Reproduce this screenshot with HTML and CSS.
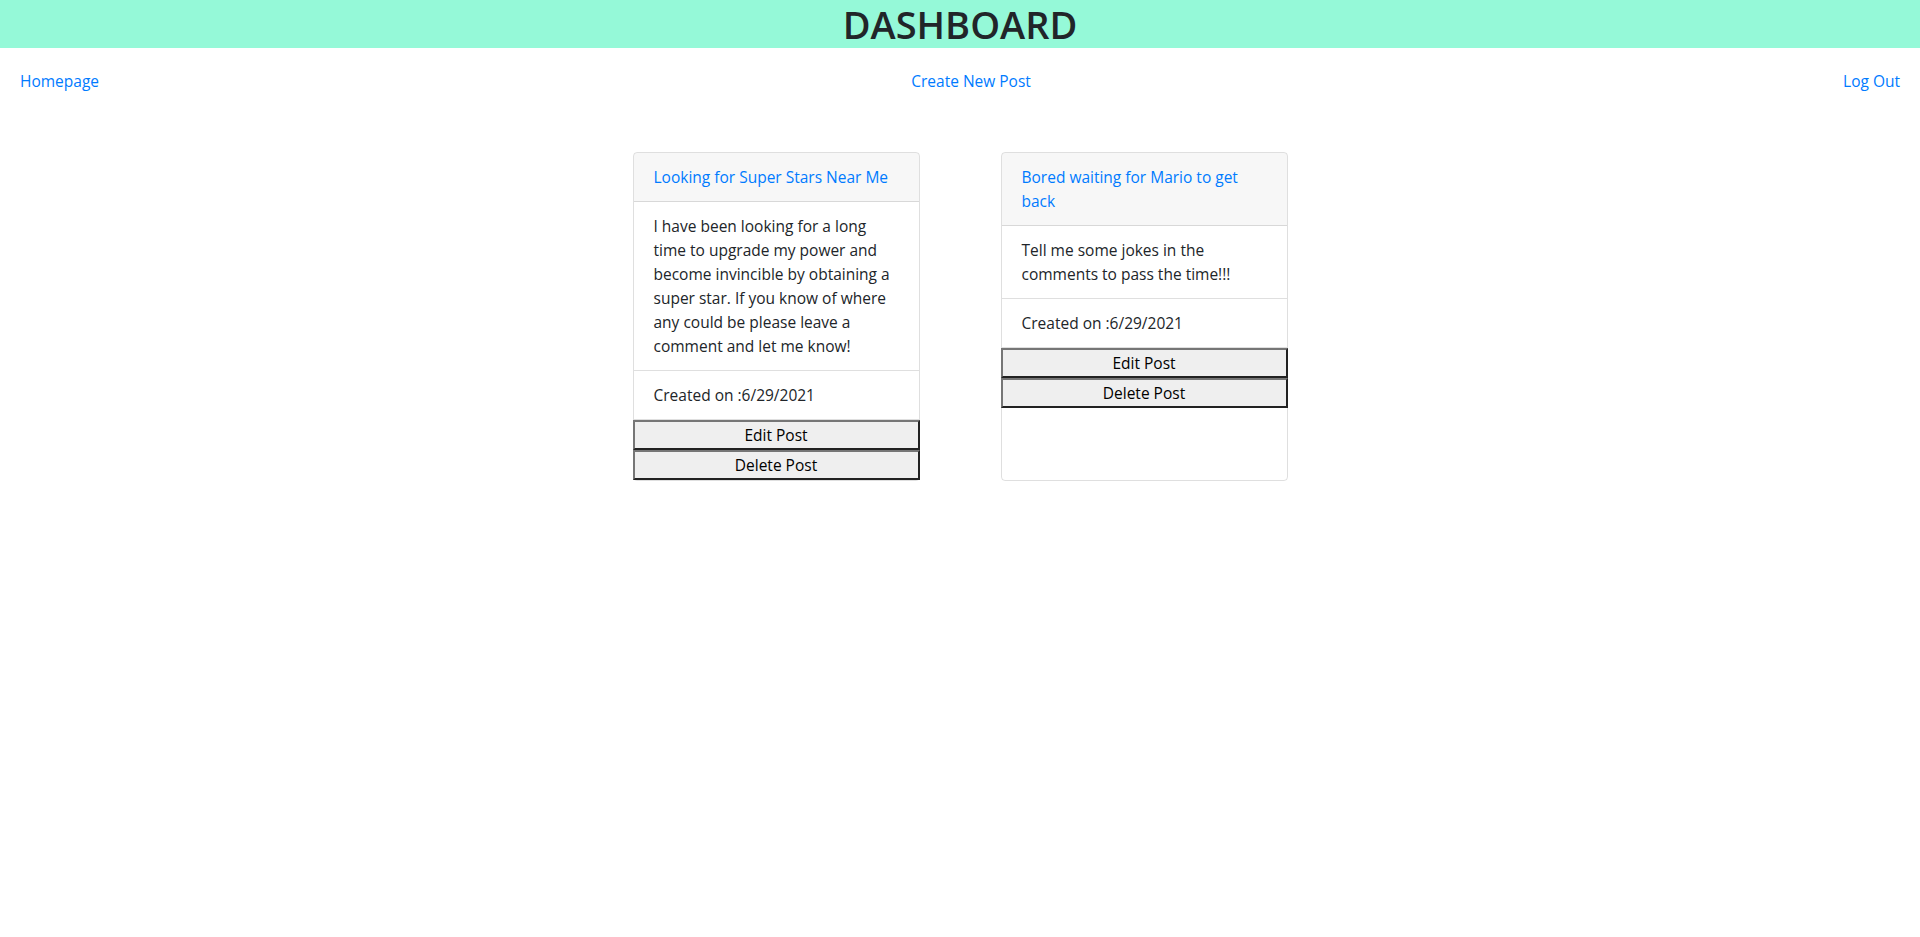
FILE: index.html
```html
<!DOCTYPE html>
<html lang="en">
<head>
<meta charset="utf-8">
<title>Dashboard</title>
<link rel="stylesheet" href="styles.css">
</head>
<body>
<header class="top-bar">
  <h1 class="title">DASHBOARD</h1>
</header>
<nav class="nav">
  <a class="nav-link" href="#">Homepage</a>
  <a class="nav-link" href="#">Create New Post</a>
  <a class="nav-link" href="#">Log Out</a>
</nav>
<main class="posts">
  <article class="card">
    <div class="card-header"><a class="post-title" href="#">Looking for Super Stars Near Me</a></div>
    <div class="card-section">I have been looking for a long time to upgrade my power and become invincible by obtaining a super star. If you know of where any could be please leave a comment and let me know!</div>
    <div class="card-section">Created on :6/29/2021</div>
    <button class="btn">Edit Post</button>
    <button class="btn">Delete Post</button>
  </article>
  <article class="card">
    <div class="card-header"><a class="post-title" href="#">Bored waiting for Mario to get back</a></div>
    <div class="card-section">Tell me some jokes in the comments to pass the time!!!</div>
    <div class="card-section">Created on :6/29/2021</div>
    <button class="btn">Edit Post</button>
    <button class="btn">Delete Post</button>
  </article>
</main>
</body>
</html>
```
FILE: styles.css
```css
* { box-sizing: border-box; }
body {
  margin: 0;
  font-family: "Open Sans", "Noto Sans", sans-serif;
  font-size: 15.5px;
  line-height: 24px;
  color: #212529;
  background: #fff;
}
.top-bar {
  background: #95f9d8;
  height: 48px;
  text-align: center;
}
.title {
  margin: 0;
  font-size: 38px;
  font-weight: 600;
  line-height: 48px;
  color: #212529;
}
.nav {
  display: flex;
  justify-content: space-between;
  padding: 21px 20px;
}
.nav-link, .post-title {
  color: #007bff;
  text-decoration: none;
}
.posts {
  display: flex;
  justify-content: center;
  align-items: stretch;
  gap: 81px;
  margin-top: 38px;
}
.card {
  width: 287px;
  border: 1px solid rgba(0, 0, 0, 0.125);
  border-radius: 4px;
  display: flex;
  flex-direction: column;
}
.card-header {
  background: rgba(0, 0, 0, 0.03);
  padding: 12px 20px;
  border-bottom: 1px solid rgba(0, 0, 0, 0.125);
  border-radius: 3px 3px 0 0;
}
.card-section {
  padding: 12px 20px;
  border-bottom: 1px solid rgba(0, 0, 0, 0.125);
}
.btn {
  margin: 0 -1px;
  height: 30px;
  padding: 1px 6px;
  font-family: inherit;
  font-size: 15.5px;
  line-height: 24px;
  color: #000;
  background: #efefef;
  border: 2px solid;
  border-color: #767676 #222 #222 #767676;
}
```
